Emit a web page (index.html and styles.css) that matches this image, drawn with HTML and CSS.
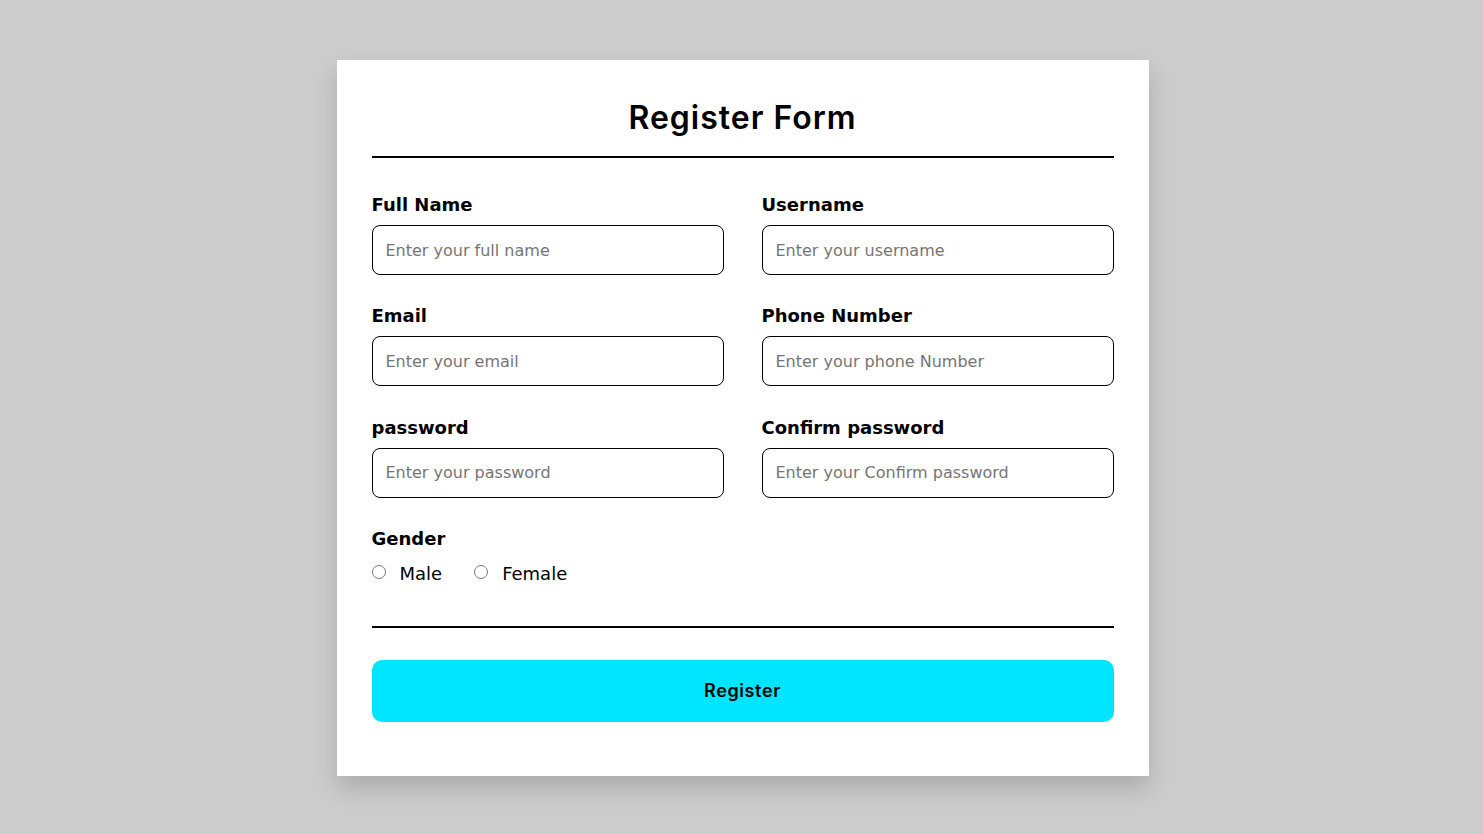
FILE: index.html
```html
<!DOCTYPE html>
<html lang="en">
<head>
<meta charset="utf-8">
<title>Register Form</title>
<link rel="stylesheet" href="styles.css">
</head>
<body>
<div class="page">
  <form class="card">
    <h1 class="title">Register Form</h1>
    <div class="rule"></div>
    <div class="grid">
      <div class="field">
        <label class="label">Full Name</label>
        <input class="input" type="text" placeholder="Enter your full name">
      </div>
      <div class="field">
        <label class="label">Username</label>
        <input class="input" type="text" placeholder="Enter your username">
      </div>
      <div class="field">
        <label class="label">Email</label>
        <input class="input" type="text" placeholder="Enter your email">
      </div>
      <div class="field">
        <label class="label">Phone Number</label>
        <input class="input" type="text" placeholder="Enter your phone Number">
      </div>
      <div class="field">
        <label class="label">password</label>
        <input class="input" type="text" placeholder="Enter your password">
      </div>
      <div class="field">
        <label class="label">Confirm password</label>
        <input class="input" type="text" placeholder="Enter your Confirm password">
      </div>
    </div>
    <div class="gender">
      <div class="label">Gender</div>
      <div class="options">
        <label class="option"><input class="radio" type="radio" name="g"><span>Male</span></label>
        <label class="option"><input class="radio" type="radio" name="g"><span>Female</span></label>
      </div>
    </div>
    <div class="rule rule-bottom"></div>
    <button class="btn" type="button">Register</button>
  </form>
</div>
</body>
</html>
```
FILE: styles.css
```css
* { box-sizing: border-box; }
html, body { margin: 0; padding: 0; }
body {
  background: #cccccc;
  font-family: "DejaVu Sans", "Noto Sans", sans-serif;
  color: #000;
}
.page {
  display: flex;
  justify-content: center;
  padding-top: 60px;
  padding-left: 2px;
  min-height: 834px;
}
.card {
  width: 812px;
  height: 716px;
  background: #fff;
  padding: 34px 35px 54px;
  box-shadow: 0 12px 22px rgba(0, 0, 0, 0.16);
  display: flex;
  flex-direction: column;
}
.title {
  margin: 0;
  font-family: Inter, "Noto Sans", sans-serif;
  font-size: 32px;
  line-height: 48px;
  font-weight: 600;
  letter-spacing: 1px;
  text-align: center;
}
.rule {
  height: 2px;
  background: #000;
  margin-top: 14px;
}
.grid {
  margin-top: 33px;
  display: grid;
  grid-template-columns: 352px 352px;
  column-gap: 38px;
  row-gap: 27.4px;
}
.field {
  display: flex;
  flex-direction: column;
  gap: 7px;
}
.label {
  font-size: 18px;
  line-height: 27px;
  font-weight: 700;
}
.input {
  height: 50px;
  border: 1px solid #000;
  border-radius: 8px;
  padding: 0 13px;
  font-family: inherit;
  font-size: 16px;
  color: #000;
  outline: none;
}
.input::placeholder { color: #757575; }
.gender {
  margin-top: 27px;
}
.options {
  display: flex;
  gap: 32px;
  margin-top: 8px;
}
.option {
  display: flex;
  align-items: center;
  gap: 14px;
  font-size: 18px;
  line-height: 27px;
}
.radio {
  margin: 0;
  width: 14px;
  height: 14px;
  position: relative;
  top: -1px;
}
.rule-bottom {
  margin-top: 39px;
}
.btn {
  margin-top: 32px;
  height: 62px;
  border: none;
  border-radius: 10px;
  background: #00e5ff;
  font-family: Inter, "Noto Sans", sans-serif;
  font-size: 18px;
  font-weight: 600;
  letter-spacing: 0.6px;
  color: #000;
}
```
